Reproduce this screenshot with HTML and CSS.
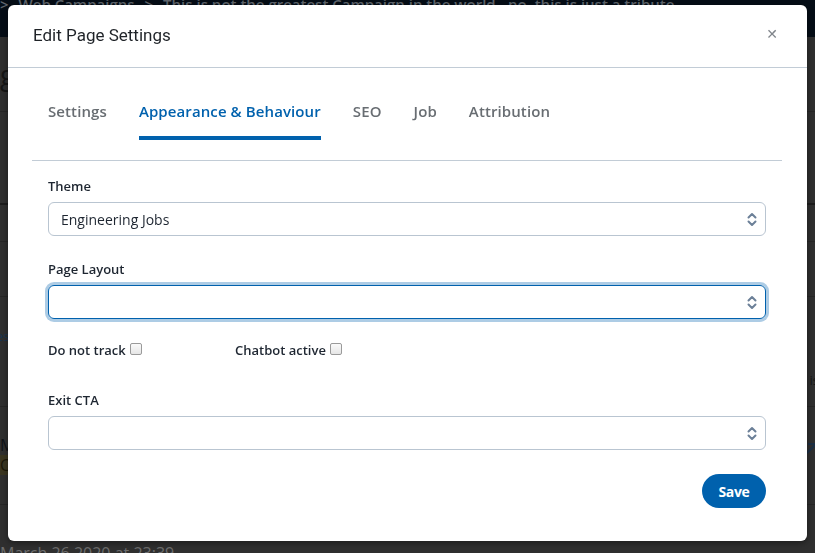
FILE: index.html
```html
<!DOCTYPE html>
<html>
<head>
<meta charset="utf-8">
<link rel="stylesheet" href="styles.css">
</head>
<body>
<div class="page">
  <div class="topbar">
    <span class="crumb">&gt;</span><span class="crumb">Web Campaigns</span><span class="crumb">&gt;</span><span class="crumb">This is not the greatest Campaign in the world...no, this is just a tribute</span>
  </div>
  <div class="page-title">g</div>
  <div class="row r1"></div>
  <div class="row r2"></div>
  <div class="row r3"></div>
  <div class="row r4"><span class="blue-txt">es</span><span class="right-txt">is</span></div>
  <div class="row r5">
    <div class="stack"><span class="dim-txt">M</span><span class="yellow">C</span></div>
    <svg class="expand" width="12" height="14" viewBox="0 0 12 14"><path d="M3 1 H11 V9 M11 1 L2 10" fill="none" stroke="#1b2f45" stroke-width="2"/></svg>
  </div>
  <div class="date">March 26 2020 at 23:39</div>
</div>

<div class="modal">
  <div class="modal-header">
    <h1 class="modal-title">Edit Page Settings</h1>
    <span class="close">&#x2715;</span>
  </div>
  <div class="modal-body">
    <nav class="tabs">
      <a class="tab">Settings</a>
      <a class="tab active">Appearance &amp; Behaviour</a>
      <a class="tab">SEO</a>
      <a class="tab">Job</a>
      <a class="tab">Attribution</a>
    </nav>
    <form class="form">
      <label class="label">Theme</label>
      <div class="select">
        <span class="select-text">Engineering Jobs</span>
        <svg class="chev" width="10" height="15" viewBox="0 0 10 15"><path d="M1.5 5.5 L5 2 L8.5 5.5 M1.5 9.5 L5 13 L8.5 9.5" fill="none" stroke="#6c8098" stroke-width="2" stroke-linecap="round" stroke-linejoin="round"/></svg>
      </div>

      <label class="label gap">Page Layout</label>
      <div class="select focus">
        <span class="select-text"></span>
        <svg class="chev" width="10" height="15" viewBox="0 0 10 15"><path d="M1.5 5.5 L5 2 L8.5 5.5 M1.5 9.5 L5 13 L8.5 9.5" fill="none" stroke="#6c8098" stroke-width="2" stroke-linecap="round" stroke-linejoin="round"/></svg>
      </div>

      <div class="checks">
        <label class="check label">Do not track <input type="checkbox"></label>
        <label class="check label">Chatbot active <input type="checkbox"></label>
      </div>

      <label class="label gap2">Exit CTA</label>
      <div class="select">
        <span class="select-text"></span>
        <svg class="chev" width="10" height="15" viewBox="0 0 10 15"><path d="M1.5 5.5 L5 2 L8.5 5.5 M1.5 9.5 L5 13 L8.5 9.5" fill="none" stroke="#6c8098" stroke-width="2" stroke-linecap="round" stroke-linejoin="round"/></svg>
      </div>

      <div class="actions">
        <button type="button" class="btn">Save</button>
      </div>
    </form>
  </div>
</div>
</body>
</html>
```
FILE: styles.css
```css
* { box-sizing: border-box; }
html, body { margin: 0; padding: 0; }
body {
  width: 815px;
  height: 553px;
  overflow: hidden;
  background: #2f2f2f;
  font-family: "Open Sans", "Liberation Sans", sans-serif;
}
.page { height: 553px; overflow: hidden; }
.topbar {
  height: 37px;
  background: #050d16;
  display: flex;
  gap: 10px;
  align-items: flex-start;
  overflow: hidden;
}
.crumb {
  color: #5f656c;
  font-size: 15px;
  font-weight: 600;
  line-height: 12px;
  margin-top: -2px;
  white-space: nowrap;
}
.page-title {
  height: 75px;
  color: #151515;
  font-size: 28px;
  line-height: 74px;
  border-bottom: 1px solid #262626;
}
.row {
  border-bottom: 1px solid #262626;
  display: flex;
  justify-content: space-between;
  align-items: flex-start;
}
.r1 { height: 93px; border-bottom: 2px solid #1c1c1c; }
.r2 { height: 37px; }
.r3 { height: 55px; }
.r4 { height: 110px; }
.r5 { height: 98px; }
.blue-txt { color: #1a3450; font-size: 13px; margin-top: 30px; margin-left: -4px; }
.right-txt { color: #151515; font-size: 13px; margin-top: 74px; margin-right: -4px; }
.stack { display: flex; flex-direction: column; margin-top: 28px; }
.dim-txt { color: #101318; font-size: 16px; line-height: 20px; }
.yellow { background: #3a3520; color: #1a1708; font-size: 16px; line-height: 20px; width: 12px; overflow: hidden; }
.expand { margin-top: 36px; margin-right: -2px; }
.date { color: #6d6d6d; font-size: 16px; line-height: 20px; margin-top: 38px; }

.modal {
  position: fixed;
  left: 8px;
  top: 5px;
  width: 799px;
  height: 536px;
  background: #fff;
  border-radius: 6px;
  box-shadow: 0 2px 6px rgba(0,0,0,0.4);
  color: #1e2631;
}
.modal-header {
  height: 63px;
  border-bottom: 1px solid #c2ccd6;
  display: flex;
  align-items: center;
  justify-content: space-between;
  padding: 0 29px 0 25px;
}
.modal-title {
  margin: 0;
  font-family: Roboto, "Liberation Sans", sans-serif;
  font-weight: 400;
  font-size: 17px;
  color: #1f2328;
  padding-bottom: 3px;
}
.close {
  color: #80858b;
  font-size: 14px;
  font-family: "DejaVu Sans", sans-serif;
  padding-bottom: 4px;
}
.modal-body { padding: 0 25px 0 24px; }
.tabs {
  display: flex;
  gap: 32px;
  padding: 0 16px 20px;
  border-bottom: 1px solid #c2ccd6;
}
.tab {
  margin-top: 33px;
  line-height: 20px;
  padding-bottom: 15px;
  border-bottom: 4px solid transparent;
  font-size: 15px;
  font-weight: 600;
  color: #686d72;
  letter-spacing: 0.1px;
}
.tab.active { color: #0061ad; border-bottom-color: #0061ad; }

.form { padding: 16px 16px 0; display: flex; flex-direction: column; }
.label {
  font-size: 13px;
  font-weight: 600;
  line-height: 18px;
  color: #1e2631;
  margin-bottom: 7px;
}
.gap { margin-top: 24px; }
.gap2 { margin-top: 32px; }
.select {
  height: 34px;
  border: 1px solid #b9c5d1;
  border-radius: 6px;
  display: flex;
  align-items: center;
  justify-content: space-between;
  padding: 0 8px 0 12px;
}
.select.focus {
  border-color: #0061ad;
  box-shadow: 0 0 0 3px rgba(0, 97, 173, 0.32);
}
.select-text { font-size: 14px; color: #1e2631; }
.chev { display: block; }
.checks {
  display: grid;
  grid-template-columns: 187px auto;
  margin-top: 22px;
}
.check { margin-bottom: 0; display: flex; align-items: center; }
.check input {
  appearance: none;
  -webkit-appearance: none;
  margin: 0 0 3px 4px;
  width: 12px;
  height: 12px;
  border: 1px solid #9a9a9a;
  border-radius: 2px;
  background: linear-gradient(#fafafa, #e6e6e6);
}
.actions { display: flex; justify-content: flex-end; margin-top: 24px; }
.btn {
  width: 64px;
  height: 34px;
  border: 0;
  border-radius: 17px;
  background: #0061ad;
  color: #fff;
  font-family: "Open Sans", sans-serif;
  font-weight: 700;
  font-size: 14px;
  letter-spacing: -0.3px;
}
```
